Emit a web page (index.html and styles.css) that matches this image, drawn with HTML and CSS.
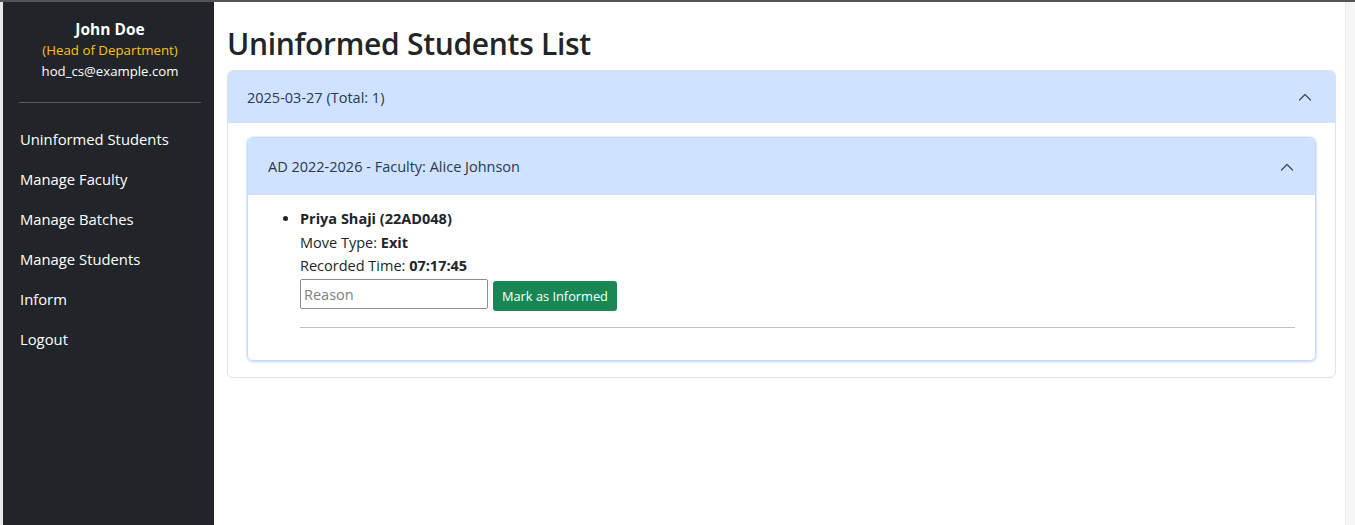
FILE: index.html
```html
<!DOCTYPE html>
<html lang="en">
<head>
<meta charset="utf-8">
<title>Uninformed Students List</title>
<link rel="stylesheet" href="styles.css">
</head>
<body>
<div class="app">
  <aside class="sidebar">
    <div class="profile">
      <div class="name">John Doe</div>
      <div class="role">(Head of Department)</div>
      <div class="email">hod_cs@example.com</div>
    </div>
    <hr class="side-hr">
    <nav class="nav">
      <a href="#">Uninformed Students</a>
      <a href="#">Manage Faculty</a>
      <a href="#">Manage Batches</a>
      <a href="#">Manage Students</a>
      <a href="#">Inform</a>
      <a href="#">Logout</a>
    </nav>
  </aside>
  <main class="main">
    <h1 class="title">Uninformed Students List</h1>
    <div class="acc outer">
      <div class="acc-head outer-head">
        <span>2025-03-27 (Total: 1)</span>
        <svg class="chev" viewBox="0 0 16 16" width="16" height="16"><path d="M2.5 11 L8 5.5 L13.5 11" fill="none" stroke="#3f4b5e" stroke-width="1.3" stroke-linecap="round" stroke-linejoin="round"/></svg>
      </div>
      <div class="acc-body outer-body">
        <div class="acc inner">
          <div class="acc-head inner-head">
            <span>AD 2022-2026 - Faculty: Alice Johnson</span>
            <svg class="chev" viewBox="0 0 16 16" width="16" height="16"><path d="M2.5 11 L8 5.5 L13.5 11" fill="none" stroke="#3f4b5e" stroke-width="1.3" stroke-linecap="round" stroke-linejoin="round"/></svg>
          </div>
          <div class="acc-body inner-body">
            <ul class="students">
              <li>
                <div class="sname">Priya Shaji (22AD048)</div>
                <div class="line">Move Type: <b>Exit</b></div>
                <div class="line">Recorded Time: <b>07:17:45</b></div>
                <div class="form-row">
                  <input class="reason" type="text" placeholder="Reason">
                  <button class="btn">Mark as Informed</button>
                </div>
                <hr class="item-hr">
              </li>
            </ul>
          </div>
        </div>
      </div>
    </div>
  </main>
  <div class="scroll"></div>
</div>
</body>
</html>
```

FILE: styles.css
```css
* { box-sizing: border-box; }
html, body { margin: 0; height: 100%; }
body {
  font-family: "Open Sans", "Noto Sans", sans-serif;
  color: #212529;
  background: #fff;
  border-top: 2px solid #555;
}
.app {
  display: flex;
  height: 523px;
}
.sidebar {
  width: 214px;
  flex: none;
  background: #212529;
  color: #fff;
  padding: 17px 13px 0 16px;
  border-left: 3px solid #e8e8e8;
}
.profile { text-align: center; line-height: 21px; }
.name { font-weight: 700; font-size: 15.5px; }
.role { color: #ffc107; font-size: 13.3px; }
.email { font-size: 13.2px; }
.side-hr {
  border: 0;
  border-top: 1px solid #5a5e63;
  margin: 20px 0 16px;
}
.nav { display: flex; flex-direction: column; }
.nav a {
  color: #fff;
  text-decoration: none;
  font-size: 14.8px;
  height: 40px;
  line-height: 40px;
  padding-left: 1px;
}
.main {
  flex: 1;
  padding: 0 9px 0 13px;
}
.title {
  font-size: 30px;
  font-weight: 600;
  margin: 24px 0 8px 0;
  line-height: 36px;
  letter-spacing: -0.3px;
}
.acc {
  border: 1px solid #dee2e6;
  border-radius: 6px;
  overflow: hidden;
}
.acc-head {
  display: flex;
  align-items: center;
  justify-content: space-between;
  background: #cfe2ff;
  color: #2a3850;
  font-size: 14.5px;
}
.outer-head { height: 52px; padding: 0 22px 0 19px; }
.outer-body { padding: 14px 19px 16px; }
.inner { box-shadow: 0 0 0 1px rgba(13,110,253,0.06), 0 1px 3px rgba(13,110,253,0.22); border-color: #c9d9f3; }
.inner-head { height: 57px; padding: 0 20px 0 20px; }
.inner-body { padding: 12px 20px 32px; }
.students {
  margin: 0;
  padding-left: 32px;
  font-size: 14.5px;
}
.students li { line-height: 23.5px; }
.sname { font-weight: 700; }
.line b { font-weight: 700; }
.form-row { display: flex; gap: 5px; align-items: center; margin-top: 0; }
.reason {
  width: 188px;
  height: 30px;
  border: 1px solid #8a8f94;
  border-radius: 2px;
  font: inherit;
  font-size: 14.5px;
  padding: 0 3px;
}
.reason::placeholder { color: #7c8287; }
.btn {
  background: #198754;
  color: #fff;
  border: 0;
  border-radius: 3px;
  height: 30px;
  padding: 0 9px;
  font-family: inherit;
  font-size: 12.8px;
  margin-top: 3px;
}
.item-hr {
  border: 0;
  border-top: 1px solid #bfc2c5;
  margin: 16px 0 0 0;
}
.scroll {
  width: 10px;
  flex: none;
  background: #f6f6f7;
  border-left: 1px solid #ececee;
}
```
